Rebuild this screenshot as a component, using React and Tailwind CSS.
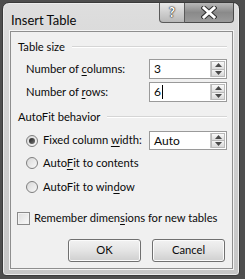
import React from 'react';

const font = { fontFamily: 'Lato, "Liberation Sans", Arial, sans-serif' };

function U({ children }) {
  return <span className="underline underline-offset-[2px] decoration-[1px]">{children}</span>;
}

function Spinner() {
  return (
    <div className="flex flex-col shrink-0 w-[15px] h-full border-l border-[#c8c8c8] bg-[#f4f4f4]">
      <div className="flex-1 flex items-center justify-center border border-[#b9b9b9] bg-gradient-to-b from-[#fafafa] to-[#dcdcdc]">
        <svg width="7" height="4" viewBox="0 0 7 4"><path d="M0 4 L3.5 0 L7 4 Z" fill="#4a4a4a" /></svg>
      </div>
      <div className="flex-1 flex items-center justify-center border border-t-0 border-[#b9b9b9] bg-gradient-to-b from-[#f4f4f4] to-[#d8d8d8]">
        <svg width="7" height="4" viewBox="0 0 7 4"><path d="M0 0 L7 0 L3.5 4 Z" fill="#4a4a4a" /></svg>
      </div>
    </div>
  );
}

function SpinBox({ value, caret }) {
  return (
    <div className="w-[78px] shrink-0 h-full flex items-stretch bg-white border border-[#9a9a9a] p-px">
      <div className="flex-1 flex items-center pl-[3px] text-[12px]">
        {value}
        {caret && <span className="w-px h-[14px] bg-black ml-px" />}
      </div>
      <Spinner />
    </div>
  );
}

function Radio({ checked }) {
  return (
    <div className="w-[12px] h-[12px] shrink-0 rounded-full border border-[#7e7e7e] bg-gradient-to-br from-[#d8d8d8] to-[#f8f8f8] flex items-center justify-center">
      {checked && <div className="w-[6px] h-[6px] rounded-full bg-gradient-to-br from-[#222] to-[#777]" />}
    </div>
  );
}

function GroupHeader({ label }) {
  return (
    <div className="h-[16px] flex items-center gap-[7px] pl-[7px] pr-[5px]">
      <span className="whitespace-nowrap">{label}</span>
      <div className="flex-1 h-[2px] border-t border-[#d5d5d5] border-b border-b-white" />
    </div>
  );
}

function Button({ children }) {
  return (
    <div className="w-[73px] h-[23px] rounded-[3px] border border-[#707070] bg-gradient-to-b from-[#f2f2f2] via-[#e4e4e4] to-[#cfcfcf] shadow-[inset_0_0_0_1px_#fbfbfb] flex items-center justify-center">
      {children}
    </div>
  );
}

export default function App() {
  return (
    <div className="w-[245px] h-[279px] bg-[#4e4e4e] pt-[2px] pl-[2px] pr-[5px] pb-[3px] text-[11.2px] text-[#0a0a0a]" style={font}>
      <div className="w-full h-full flex flex-col rounded-t-[7px] rounded-b-[4px] border border-[#3a3a3a] bg-gradient-to-b from-[#dedede] via-[#d0d0d0] to-[#c6c6c6] shadow-[inset_0_0_0_1px_#ececec]">
        {/* Title bar */}
        <div className="h-[28px] flex items-start pl-[8px] pr-[5px]">
          <span className="pt-[8px] text-[13px]">Insert Table</span>
          <div className="ml-auto flex h-[20px]">
            <div className="w-[26px] h-full rounded-bl-[4px] border border-t-0 border-[#5a5a5a] bg-gradient-to-b from-[#e8e8e8] via-[#cfcfcf] to-[#b8b8b8] flex items-center justify-center text-[13px] font-bold text-white [text-shadow:0_0_1px_#222,0_0_1px_#222,0_0_2px_#444]">
              ?
            </div>
            <div className="w-[49px] h-full rounded-br-[4px] border border-t-0 border-l-0 border-[#4a4a4a] bg-gradient-to-b from-[#b8b8b8] via-[#8a8a8a] to-[#9a9a9a] flex items-center justify-center">
              <svg width="16" height="13" viewBox="0 0 16 13">
                <path d="M3 2 L13 11 M13 2 L3 11" stroke="#333" strokeWidth="5" strokeLinecap="square" />
                <path d="M3 2 L13 11 M13 2 L3 11" stroke="#fff" strokeWidth="3" strokeLinecap="square" />
              </svg>
            </div>
          </div>
        </div>

        {/* Client area */}
        <div className="flex-1 ml-[7px] mr-[6px] mb-[6px] flex flex-col bg-[#f0f0f0] border border-[#8e8e8e] shadow-[0_0_0_1px_#f4f4f4]">
          <div className="mt-[7px]">
            <GroupHeader label="Table size" />
          </div>
          <div className="mt-[4px] h-[20px] flex items-center justify-between pl-[15px] pr-[5px]">
            <span>Number of <U>c</U>olumns:</span>
            <SpinBox value="3" />
          </div>
          <div className="mt-[3px] h-[20px] flex items-center justify-between pl-[15px] pr-[5px]">
            <span>Number of <U>r</U>ows:</span>
            <SpinBox value="6" caret />
          </div>
          <div className="mt-[7px]">
            <GroupHeader label="AutoFit behavior" />
          </div>
          <div className="mt-[6px] h-[19px] flex items-center pl-[15px] pr-[5px]">
            <Radio checked />
            <span className="ml-[5px] whitespace-nowrap">Fixed column <U>w</U>idth:</span>
            <div className="ml-auto h-full">
              <SpinBox value="Auto" />
            </div>
          </div>
          <div className="mt-[3px] h-[20px] flex items-center pl-[15px]">
            <Radio />
            <span className="ml-[5px]">Auto<U>F</U>it to contents</span>
          </div>
          <div className="mt-[4px] h-[20px] flex items-center pl-[15px]">
            <Radio />
            <span className="ml-[5px]">AutoFit to win<U>d</U>ow</span>
          </div>
          <div className="mt-[11px] h-[20px] flex items-center pl-[6px]">
            <div className="w-[13px] h-[13px] shrink-0 border border-[#8a8a8a] bg-gradient-to-br from-[#dcdcdc] to-[#fafafa] shadow-[inset_0_0_0_1px_#f2f2f2]" />
            <span className="ml-[4px] whitespace-nowrap">Remember dimen<U>s</U>ions for new tables</span>
          </div>
          <div className="mt-[11px] flex justify-end gap-[11px] pr-[7px]">
            <Button>OK</Button>
            <Button>Cancel</Button>
          </div>
        </div>
      </div>
    </div>
  );
}
